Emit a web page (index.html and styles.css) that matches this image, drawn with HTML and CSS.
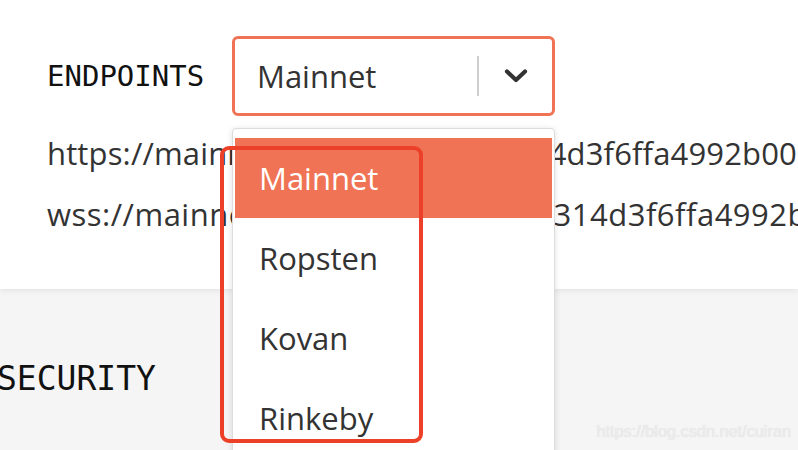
FILE: index.html
```html
<!DOCTYPE html>
<html>
<head>
<meta charset="utf-8">
<link rel="stylesheet" href="styles.css">
</head>
<body>
<div class="page">
  <section class="card">
    <div class="endpoint-row">
      <div class="label">ENDPOINTS</div>
      <div class="select-wrap">
        <div class="select">
          <span class="select-value">Mainnet</span>
          <span class="select-sep"></span>
          <span class="select-chevron">
            <svg width="24" height="16" viewBox="0 0 24 16"><path d="M3 3.5 L12 12 L21 3.5" fill="none" stroke="#333" stroke-width="4.2" stroke-linecap="round" stroke-linejoin="round"/></svg>
          </span>
        </div>
        <ul class="menu">
          <li class="menu-item active">Mainnet</li>
          <li class="menu-item">Ropsten</li>
          <li class="menu-item">Kovan</li>
          <li class="menu-item">Rinkeby</li>
        </ul>
        <div class="annotation"></div>
      </div>
    </div>
    <div class="urls">
      <div class="url">https://mainnet.infura.io/v3/9c2314d3f6ffa4992b00e7c1a58f6d2</div>
      <div class="url url-ws">wss://mainnet.infura.io/ws/v3/9c2314d3f6ffa4992b00e7c1a58f6d2</div>
    </div>
  </section>
  <section class="security">
    <div class="label big">SECURITY</div>
  </section>
  <div class="watermark">https://blog.csdn.net/cuiran</div>
</div>
</body>
</html>
```
FILE: styles.css
```css
html, body {
  margin: 0;
  padding: 0;
}
body {
  background: #f5f5f5;
  width: 798px;
  height: 450px;
  overflow: hidden;
  font-family: "Open Sans", "Liberation Sans", sans-serif;
}
.page {
  position: relative;
  width: 798px;
  height: 450px;
  overflow: hidden;
}
.card {
  background: #fff;
  height: 289px;
  box-sizing: border-box;
  padding: 36px 0 0 47px;
  box-shadow: 0 2px 6px rgba(0,0,0,0.07);
  position: relative;
  z-index: 1;
  white-space: nowrap;
}
.endpoint-row {
  display: flex;
  align-items: center;
}
.label {
  font-family: "DejaVu Sans Mono", "Liberation Mono", monospace;
  font-size: 29px;
  color: #111;
  width: 185px;
}
.select-wrap {
  position: relative;
  z-index: 3;
}
.select {
  width: 323px;
  height: 80px;
  box-sizing: border-box;
  border: 3px solid #ef7354;
  border-radius: 6px;
  background: #fff;
  display: flex;
  align-items: center;
  padding-left: 22px;
}
.select-value {
  font-size: 31px;
  color: #333;
  flex: 1;
}
.select-sep {
  width: 2px;
  height: 40px;
  background: #cfcfcf;
}
.select-chevron {
  width: 73px;
  display: flex;
  justify-content: center;
  align-items: center;
}
.select-chevron svg { display: block; }
.menu {
  position: absolute;
  left: 0;
  top: 92px;
  width: 323px;
  height: 340px;
  margin: 0;
  padding: 9px 2px 0 2px;
  box-sizing: border-box;
  list-style: none;
  background: #fff;
  border: 1px solid #dcdcdc;
  border-radius: 4px;
  box-shadow: 0 1px 6px rgba(0,0,0,0.12);
}
.menu-item {
  height: 80px;
  display: flex;
  align-items: center;
  padding-left: 24px;
  font-size: 31px;
  color: #333;
}
.menu-item.active {
  background: #ef7354;
  color: #fff;
}
.annotation {
  position: absolute;
  left: -12px;
  top: 110px;
  width: 203px;
  height: 297px;
  box-sizing: border-box;
  border: 4px solid #ec4128;
  border-radius: 9px;
}
.urls {
  padding-top: 7px;
}
.url {
  font-size: 31px;
  color: #333;
  line-height: 61px;
  letter-spacing: 0.15px;
}
.url-ws {
  letter-spacing: 0.5px;
}
.security {
  padding: 70px 0 0 0;
}
.label.big {
  font-size: 33px;
  margin-left: -3px;
}
.watermark {
  position: absolute;
  right: 7px;
  bottom: 9px;
  font-family: "Liberation Sans", Arial, sans-serif;
  font-size: 16.3px;
  color: #ececec;
  text-shadow: 0 0 1px rgba(200,200,200,0.6);
  z-index: 5;
}
```
